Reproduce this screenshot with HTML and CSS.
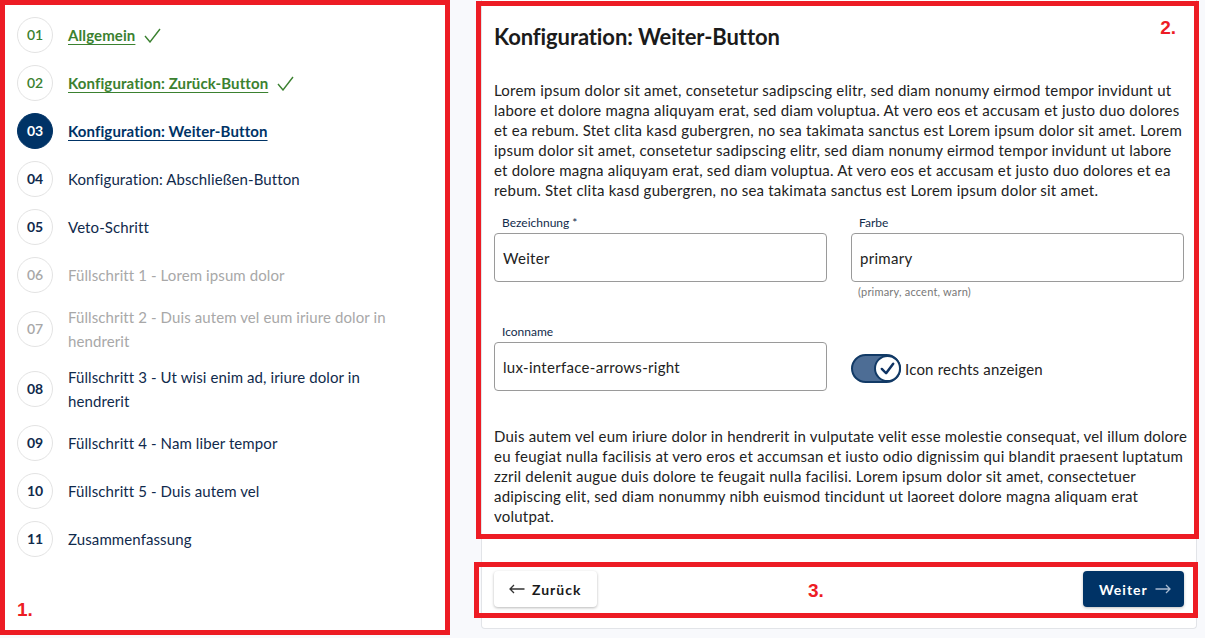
FILE: index.html
```html
<!DOCTYPE html>
<html lang="de">
<head>
<meta charset="utf-8">
<title>Stepper</title>
<link rel="stylesheet" href="styles.css">
</head>
<body>
<div class="page">
  <nav class="steps">
    <ol class="step-list">
      <li class="step done"><span class="num">01</span><span class="label"><a>Allgemein</a><svg class="check" viewBox="0 0 17 15" width="17" height="15"><polyline points="1,8 6,14 16,1"/></svg></span></li>
      <li class="step done"><span class="num">02</span><span class="label"><a>Konfiguration: Zurück-Button</a><svg class="check" viewBox="0 0 17 15" width="17" height="15"><polyline points="1,8 6,14 16,1"/></svg></span></li>
      <li class="step current"><span class="num">03</span><span class="label"><a>Konfiguration: Weiter-Button</a></span></li>
      <li class="step"><span class="num">04</span><span class="label">Konfiguration: Abschließen-Button</span></li>
      <li class="step"><span class="num">05</span><span class="label">Veto-Schritt</span></li>
      <li class="step disabled"><span class="num">06</span><span class="label">Füllschritt 1 - Lorem ipsum dolor</span></li>
      <li class="step disabled"><span class="num">07</span><span class="label">Füllschritt 2 - Duis autem vel eum iriure dolor in hendrerit</span></li>
      <li class="step"><span class="num">08</span><span class="label">Füllschritt 3 - Ut wisi enim ad, iriure dolor in hendrerit</span></li>
      <li class="step"><span class="num">09</span><span class="label">Füllschritt 4 - Nam liber tempor</span></li>
      <li class="step"><span class="num">10</span><span class="label">Füllschritt 5 - Duis autem vel</span></li>
      <li class="step"><span class="num">11</span><span class="label">Zusammenfassung</span></li>
    </ol>
  </nav>

  <main class="card">
    <section class="content">
      <h1 class="title">Konfiguration: Weiter-Button</h1>
      <p class="text">Lorem ipsum dolor sit amet, consetetur sadipscing elitr, sed diam nonumy eirmod tempor invidunt ut<br>labore et dolore magna aliquyam erat, sed diam voluptua. At vero eos et accusam et justo duo dolores<br>et ea rebum. Stet clita kasd gubergren, no sea takimata sanctus est Lorem ipsum dolor sit amet. Lorem<br>ipsum dolor sit amet, consetetur sadipscing elitr, sed diam nonumy eirmod tempor invidunt ut labore<br>et dolore magna aliquyam erat, sed diam voluptua. At vero eos et accusam et justo duo dolores et ea<br>rebum. Stet clita kasd gubergren, no sea takimata sanctus est Lorem ipsum dolor sit amet.</p>

      <div class="form">
        <div class="field">
          <label class="field-label">Bezeichnung *</label>
          <div class="input">Weiter</div>
        </div>
        <div class="field">
          <label class="field-label">Farbe</label>
          <div class="input">primary</div>
          <div class="hint">(primary, accent, warn)</div>
        </div>
        <div class="field">
          <label class="field-label">Iconname</label>
          <div class="input">lux-interface-arrows-right</div>
        </div>
        <div class="field toggle-field">
          <span class="toggle">
            <span class="thumb"><svg viewBox="0 0 20 20" width="19" height="19"><polyline points="4,10.5 8.5,15 16,5"/></svg></span>
          </span>
          <span class="toggle-label">Icon rechts anzeigen</span>
        </div>
      </div>

      <p class="text text-2">Duis autem vel eum iriure dolor in hendrerit in vulputate velit esse molestie consequat, vel illum dolore<br>eu feugiat nulla facilisis at vero eros et accumsan et iusto odio dignissim qui blandit praesent luptatum<br>zzril delenit augue duis dolore te feugait nulla facilisi. Lorem ipsum dolor sit amet, consectetuer<br>adipiscing elit, sed diam nonummy nibh euismod tincidunt ut laoreet dolore magna aliquam erat<br>volutpat.</p>
    </section>

    <footer class="actions">
      <button class="btn btn-back"><svg class="arrow" viewBox="0 0 16 10" width="16" height="10"><path d="M15.5 5H1M5 1L1 5l4 4"/></svg>Zurück</button>
      <button class="btn btn-next">Weiter<svg class="arrow" viewBox="0 0 16 10" width="16" height="10"><path d="M0.5 5H15M11 1l4 4-4 4"/></svg></button>
    </footer>
  </main>
</div>

<div class="anno anno-1"><span class="anno-num">1.</span></div>
<div class="anno anno-2"><span class="anno-num">2.</span></div>
<div class="anno anno-3"><span class="anno-num">3.</span></div>
</body>
</html>
```

FILE: styles.css
```css
* { box-sizing: border-box; }

html, body {
  margin: 0;
  padding: 0;
}

body {
  background: #f8f9fc;
  font-family: Lato, "Liberation Sans", sans-serif;
  color: #222;
  width: 1205px;
  height: 638px;
  overflow: hidden;
  position: relative;
}

.page {
  display: flex;
  align-items: flex-start;
  gap: 36px;
}

/* ---------- Stepper ---------- */
.steps {
  width: 445px;
  height: 630px;
  background: #fff;
  padding: 17px 0 0 17px;
}

.step-list {
  list-style: none;
  margin: 0;
  padding: 0;
  display: flex;
  flex-direction: column;
  gap: 12px;
}

.step {
  display: flex;
  align-items: center;
  gap: 15px;
  min-height: 36px;
  font-size: 15px;
  line-height: 24px;
  letter-spacing: 0.1px;
  color: #102a4c;
}

.num {
  flex: none;
  width: 36px;
  height: 36px;
  border-radius: 50%;
  border: 1px solid #e3e3e3;
  display: flex;
  align-items: center;
  justify-content: center;
  font-size: 14px;
  font-weight: 700;
  letter-spacing: 0;
  color: #102a4c;
  background: #fff;
}

.label {
  max-width: 340px;
  display: flex;
  align-items: center;
}

.label a {
  text-decoration: underline;
  text-underline-offset: 3px;
  font-weight: 700;
}

.step.done .num { color: #3b8130; font-weight: 600; }
.step.done .label a { color: #3b8130; }
.check {
  margin-left: 9px;
  fill: none;
  stroke: #3b8130;
  stroke-width: 1.4;
}

.step.current .num {
  background: #003366;
  border-color: #003366;
  color: #fff;
}
.step.current .label a { color: #003366; }

.step.disabled,
.step.disabled .num { color: #a8a8a8; }
.step.disabled .num { font-weight: 600; }

/* ---------- Card ---------- */
.card {
  width: 716px;
  height: 629px;
  background: #fff;
  border: 1px solid #e2e4e8;
  border-top: none;
  border-radius: 0 0 4px 4px;
  display: flex;
  flex-direction: column;
}

.content {
  padding: 22px 12px 0 12px;
}

.title {
  margin: 0;
  font-size: 22px;
  line-height: 30px;
  font-weight: 700;
  color: #1b1b1b;
  letter-spacing: -0.1px;
}

.text {
  margin: 28px -24px 0 0;
  font-size: 15px;
  line-height: 20px;
  letter-spacing: 0.22px;
  color: #222;
}

.text-2 { margin-top: 35px; }

.form {
  margin-top: 15px;
  display: grid;
  grid-template-columns: 333px 333px;
  column-gap: 24px;
  row-gap: 25px;
}

.field {
  display: flex;
  flex-direction: column;
}

.field-label {
  font-size: 12px;
  line-height: 16px;
  padding-left: 8px;
  margin-bottom: 2px;
  color: #122b4b;
}

.input {
  height: 49px;
  border: 1px solid #9a9a9a;
  border-radius: 4px;
  padding: 0 8px;
  display: flex;
  align-items: center;
  font-size: 15px;
  letter-spacing: 0.3px;
  color: #222;
}

.hint {
  margin-top: 3px;
  padding-left: 7px;
  font-size: 11px;
  line-height: 14px;
  letter-spacing: 0.2px;
  color: #777;
}

.toggle-field {
  flex-direction: row;
  align-items: center;
  gap: 4px;
  margin-top: 30px;
  height: 29px;
}

.toggle {
  position: relative;
  width: 50px;
  height: 29px;
  border-radius: 15px;
  background: #4d6d95;
  border: 2px solid #123a66;
  flex: none;
}

.thumb {
  position: absolute;
  right: -2px;
  top: -1px;
  width: 27px;
  height: 27px;
  border-radius: 50%;
  background: #fff;
  border: 2px solid #123a66;
  display: flex;
  align-items: center;
  justify-content: center;
}

.thumb svg {
  fill: none;
  stroke: #0f3363;
  stroke-width: 2.6;
  stroke-linecap: round;
  stroke-linejoin: round;
}

.toggle-label {
  font-size: 15px;
  letter-spacing: 0.2px;
  color: #222;
}

/* ---------- Footer ---------- */
.actions {
  margin-top: auto;
  padding: 0 12px 21px;
  display: flex;
  justify-content: space-between;
}

.btn {
  height: 36px;
  border: none;
  border-radius: 4px;
  display: flex;
  align-items: center;
  gap: 7px;
  font-family: Lato, "Liberation Sans", sans-serif;
  font-size: 14px;
  font-weight: 700;
  letter-spacing: 1px;
  cursor: pointer;
}

.btn .arrow {
  fill: none;
  stroke-width: 1.3;
}

.btn-back {
  width: 103px;
  padding: 0 0 0 15px;
  background: #fff;
  color: #1a1a1a;
  box-shadow: 0 1px 3px rgba(0,0,0,0.28);
}
.btn-back .arrow { stroke: #333; }

.btn-next {
  width: 101px;
  padding: 0 0 0 16px;
  background: #003366;
  color: #fff;
  box-shadow: 0 1px 3px rgba(0,0,0,0.25);
}
.btn-next .arrow { stroke: #a9bbd2; }

/* ---------- Annotations ---------- */
.anno {
  position: absolute;
  border: 5px solid #ed1c24;
  pointer-events: none;
}

.anno-num {
  position: absolute;
  color: #ed1c24;
  font-family: "Liberation Sans", Arial, sans-serif;
  font-weight: 700;
  font-size: 19px;
  line-height: 20px;
}

.anno-1 { left: 0; top: 0; width: 450px; height: 635px; }
.anno-1 .anno-num { left: 12px; bottom: 10px; }

.anno-2 { left: 476px; top: 1px; width: 723px; height: 538px; }
.anno-2 .anno-num { right: 18px; top: 12px; }

.anno-3 { left: 474px; top: 562px; width: 724px; height: 56px; }
.anno-3 .anno-num { left: 329px; top: 14px; }
```
